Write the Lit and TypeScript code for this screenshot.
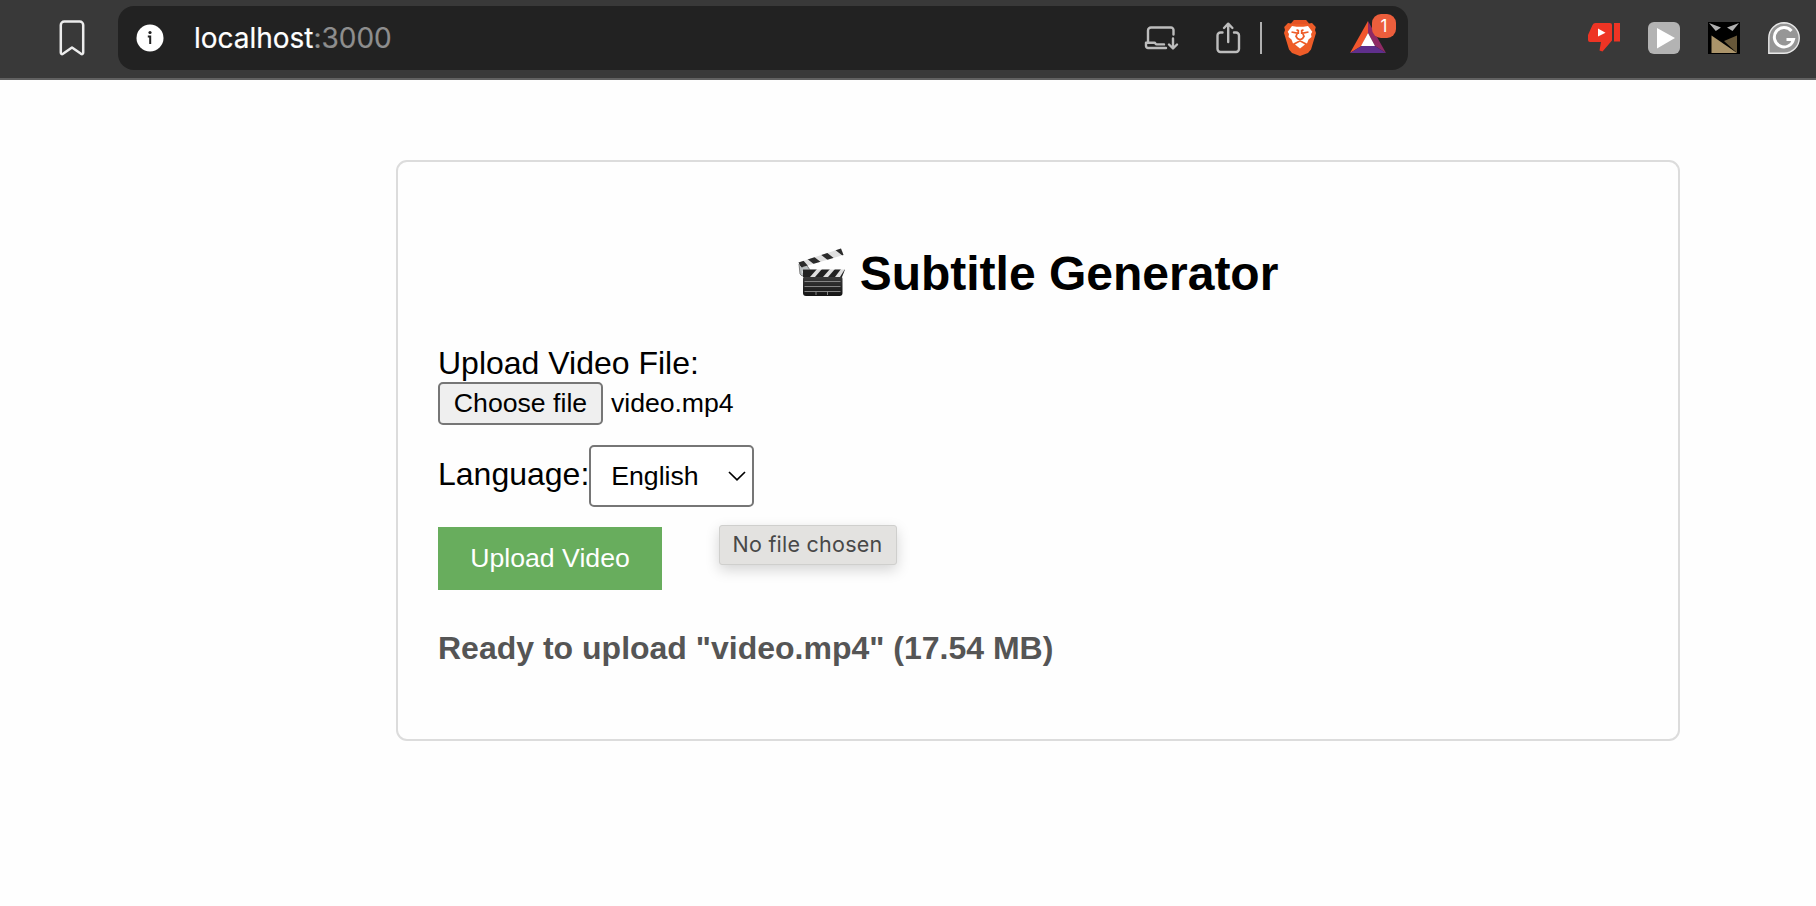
import { LitElement, html, css, svg } from "lit";
import { customElement, property } from "lit/decorators.js";

const bookmark = svg`<path d="M1.800 32.500V5a3.500 3.500 0 0 1 3.500-3.500H20.700a3.500 3.500 0 0 1 3.500 3.500V32.500c0 1.500-1 2-2.200 1.300L13 27.500 4 33.800c-1.200.8-2.200.2-2.200-1.300Z" fill="none" stroke="#ececec" stroke-width="2.500" stroke-linejoin="round"/>`;

const install = svg`<g fill="none" stroke="#bdbdbd" stroke-width="2.400" stroke-linecap="round" stroke-linejoin="round">
  <path d="M3 16.500V4.500a3 3 0 0 1 3-3H26a2.500 2.500 0 0 1 2.500 2.500V8.500"/>
  <path d="M21 22H3a2 2 0 0 1-2-2V16.800H9.500c1 0 1 1.600 2 1.600H19"/>
  <path d="M28 12.500V22M24 18.500l4 4 4-4"/></g>`;

const share = svg`<g fill="none" stroke="#bdbdbd" stroke-width="2.400" stroke-linecap="round" stroke-linejoin="round">
  <path d="M6.500 10.500H4.500a3 3 0 0 0-3 3V27a3 3 0 0 0 3 3H20a3 3 0 0 0 3-3V13.500a3 3 0 0 0-3-3H18"/>
  <path d="M12.200 20V2M8 6l4.200-4.300L16.400 6"/></g>`;

const lion = svg`<path fill="#ee5c28" d="M10 0H22L25 3.500 28 3 31.800 7 31 10 32 13 27 29.500 24 33 16 36 8 33 5 29.500 0 13 1 10 .2 7 4 3 7 3.500Z"/>
  <path fill="#d9491e" d="M10 0H22L25 3.500 21 4H11L7 3.500Z" opacity=".45"/>
  <path fill="#fff" d="M8 6 12.500 6.800H19.500L24 6 28.300 11.800 27 14 27.500 17 24.500 19.500 23 23.500 18 21 16 20.500 14 21 9 23.500 7.500 19.500 4.500 17 5 14 3.700 11.800Z"/>
  <path fill="none" stroke="#ee5c28" stroke-width="1.700" d="M7.500 12 13.300 13.200 12 16.300 13.500 18.500 16 19.800 18.500 18.500 20 16.300 18.700 13.200 24.500 12M12.500 9.800 14.300 10.600V14M19.500 9.800 17.700 10.600V14"/>
  <path fill="#fff" d="M16 21.800 21 24.500 16 28.400 11 24.500Z"/>`;

const triangle = svg`<path fill="#f1562d" d="M18 0V12L11.500 25 0 32Z"/><path fill="#8f2a64" d="M18 0 36 32 25 25 18 12Z"/>
  <path fill="#5f2f8c" d="M0 32 11.500 25H25L36 32Z"/><path fill="#fff" d="M18 12 25 25H11Z"/>`;

const thumb = svg`<path fill="#ee3424" d="M7.500 1H22a2 2 0 0 1 2 2V18.500L14.500 29.500 11.500 28.500 13 20H2a2 2 0 0 1-2-2V13L4.500 3Q5.300 1 7.500 1ZM26 1H32V19.500H26Z"/><path fill="#fff" d="M10 6.500 17.500 10.700 10 14.500Z"/>`;

const play = svg`<rect width="32" height="32" rx="6" fill="#b3b3b3"/><path fill="#fff" d="M9 6 27 16 9 26.500Z"/>`;

const mask = svg`<rect width="32" height="32" fill="#000"/>
  <path fill="#b0b0b0" d="M1 1 13 5.500 7.800 9ZM31 1 19 5.500 24.500 9Z"/>
  <path fill="#675739" d="M16 19 29 13.500V31Z"/><path fill="#ab946a" d="M3.500 13.500 29 31H3.500Z"/>`;

const gee = svg`<path fill="#969696" stroke="#e8e8e8" stroke-width="1.400" d="M16 .8A15.200 15.200 0 0 1 16 31.300H.8V16A15.200 15.200 0 0 1 16 .8Z"/>
  <path fill="none" stroke="#fff" stroke-width="3" d="M23.500 9A9.700 9.700 0 1 0 25.500 17.500H18.500"/>`;

const clapper = svg`<defs>
    <linearGradient id="body" x1="0" y1="0" x2="0" y2="1"><stop offset="0" stop-color="#3c3c3c"/><stop offset="1" stop-color="#141414"/></linearGradient>
    <clipPath id="arm"><path d="M.5 14.500 43 .5 45.500 7 3 19.500Z"/></clipPath>
    <clipPath id="bar"><path d="M5 21.500H47L44 29H5Z"/></clipPath>
  </defs>
  <path fill="#b9bec0" stroke="#686868" stroke-width=".8" d="M1 16 8 16 12 22 11 26 4 28 2 26Z"/>
  <circle cx="5.500" cy="24" r="1.200" fill="#eee"/><circle cx="4" cy="18.500" r="1" fill="#555"/>
  <g clip-path="url(#arm)"><rect width="48" height="22" fill="#dfdfdf"/>
    <path fill="#2b2b2b" d="M-3 12 4 11 11 19 4 20ZM8 10 15 8 24 15 17 17ZM22 6 28 4 37 11 31 13ZM36 1 43 -1 51 7 45 8Z"/></g>
  <rect x="5" y="28" width="39.500" height="20" rx="3" fill="url(#body)"/>
  <g clip-path="url(#bar)"><rect x="4" y="21" width="44" height="9" fill="#dfdfdf"/>
    <path fill="#222" d="M5 21H19L12 29H5ZM24 21H32L25 29H17ZM37 21H43L37 29H30ZM47 21H50L46 29H42Z"/></g>
  <path stroke="#8d8d8d" stroke-width=".9" d="M6.500 33.500H42.500M6.500 38.500H42.500M6.500 43.500H42.500M18 43.500V47M29.500 43.500V47"/>`;

@customElement("browser-bar")
class BrowserBar extends LitElement {
  static styles = css`
    :host { display: flex; box-sizing: border-box; height: 80px; padding: 6px 16px 0 59px; background: #393939; border-bottom: 2px solid #616161; font-family: Inter, sans-serif; }
    svg { display: block; overflow: visible; flex: none; }
    .bookmark { margin: 14px 33px 0 0; }
    .address { box-sizing: border-box; display: flex; align-items: center; width: 1290px; height: 64px; border-radius: 16px; background: #222; padding: 0 12px 0 18px; }
    .info { margin-right: 30px; }
    .url { flex: 1; font-size: 28px; line-height: 34px; color: #fff; letter-spacing: -0.020px; -webkit-text-stroke: 0.200px; }
    .port { color: #8e8e8e; }
    .install { margin-right: 39px; }
    .share { margin: -2px 20px 0 0; }
    .divider { width: 2px; height: 32px; background: #b0b0b0; margin-right: 22px; }
    .rewards { position: relative; margin: -2px 10px 0 34px; }
    .badge { position: absolute; left: 22px; top: -7px; width: 24px; height: 24px; border-radius: 9px; background: #ec5e3c; color: #fff; font-size: 17px; line-height: 24px; text-align: center; }
    .extensions { display: flex; gap: 28px; margin: 16px 0 0 auto; }
  `;
  render() {
    return html`
      <svg class="bookmark" width="26" height="36">${bookmark}</svg>
      <div class="address">
        <svg class="info" width="28" height="28"><circle cx="14" cy="14" r="13.500" fill="#fff"/><circle cx="14" cy="8.500" r="1.600" fill="#222"/><path d="M11.800 12.500H14.200V20" fill="none" stroke="#222" stroke-width="2"/></svg>
        <div class="url">localhost<span class="port">:3000</span></div>
        <svg class="install" width="32" height="24">${install}</svg>
        <svg class="share" width="24" height="31">${share}</svg>
        <div class="divider"></div>
        <svg width="32" height="36">${lion}</svg>
        <div class="rewards"><svg width="36" height="32">${triangle}</svg><span class="badge">1</span></div>
      </div>
      <div class="extensions">
        <svg width="32" height="32">${thumb}</svg>
        <svg width="32" height="32">${play}</svg>
        <svg width="32" height="32">${mask}</svg>
        <svg width="32" height="32">${gee}</svg>
      </div>`;
  }
}

@customElement("subtitle-form")
class SubtitleForm extends LitElement {
  @property() file = "video.mp4";
  @property() size = "17.54 MB";
  static styles = css`
    :host { position: relative; display: block; box-sizing: border-box; width: 1284px; height: 581px; padding: 84px 40px 0; border: 2px solid #dcdcdc; border-radius: 11px; font: 32px/37px "Liberation Sans", Arial, sans-serif; color: #000; }
    h1 { display: flex; justify-content: center; align-items: center; gap: 14px; margin: 0 0 43px; font-size: 48px; line-height: 56px; }
    .clapper { display: block; margin-top: -5px; }
    .picker { display: flex; align-items: center; gap: 8px; font-size: 26.670px; line-height: 30px; }
    .choose { box-sizing: border-box; width: 165px; height: 43px; padding: 0 0 2px; border: 2px solid #767676; border-radius: 5px; background: #efefef; font: inherit; color: #000; }
    .name { padding-bottom: 2px; letter-spacing: -0.050px; }
    .language { display: flex; align-items: baseline; margin-top: 20px; height: 62px; }
    .select { box-sizing: border-box; display: flex; align-items: center; justify-content: space-between; width: 165px; height: 62px; padding: 0 6px 0 20px; border: 2px solid #767676; border-radius: 5px; background: #fff; font-size: 26.670px; }
    .upload { display: block; width: 224px; height: 63px; margin-top: 20px; padding: 0 0 2px; border: 0; background: #68ad5d; color: #fff; font: 26.670px/30px "Liberation Sans", Arial, sans-serif; }
    .status { margin: 40px 0 0; font-weight: bold; color: #555; }
    .tip { position: absolute; left: 321px; top: 363px; box-sizing: border-box; width: 178px; height: 40px; padding-left: 12.500px; border: 1px solid #cfcfcd; border-radius: 3px; background: #e3e2e0; box-shadow: 0 5px 14px rgba(0,0,0,.17); color: #484848; font: 21.500px/37px Inter, sans-serif; letter-spacing: .25px; white-space: nowrap; }
  `;
  render() {
    return html`
      <h1><svg class="clapper" width="48" height="48">${clapper}</svg><span>Subtitle Generator</span></h1>
      <div>Upload Video File:</div>
      <div class="picker"><button class="choose">Choose file</button><span class="name">${this.file}</span></div>
      <div class="language"><span>Language:</span>
        <div class="select"><span>English</span><svg width="18" height="10"><path d="M1 1 9 8.800 17 1" fill="none" stroke="#000" stroke-width="1.700"/></svg></div>
      </div>
      <button class="upload">Upload Video</button>
      <p class="status">Ready to upload "${this.file}" (${this.size})</p>
      <div class="tip">No file chosen</div>`;
  }
}

@customElement("app-root")
class AppRoot extends LitElement {
  static styles = css`
    :host { display: block; height: 906px; background: #fefefe; overflow: hidden; }
    .page { padding: 80px 0 0 396px; }
  `;
  render() {
    return html`<browser-bar></browser-bar><main class="page"><subtitle-form></subtitle-form></main>`;
  }
}
